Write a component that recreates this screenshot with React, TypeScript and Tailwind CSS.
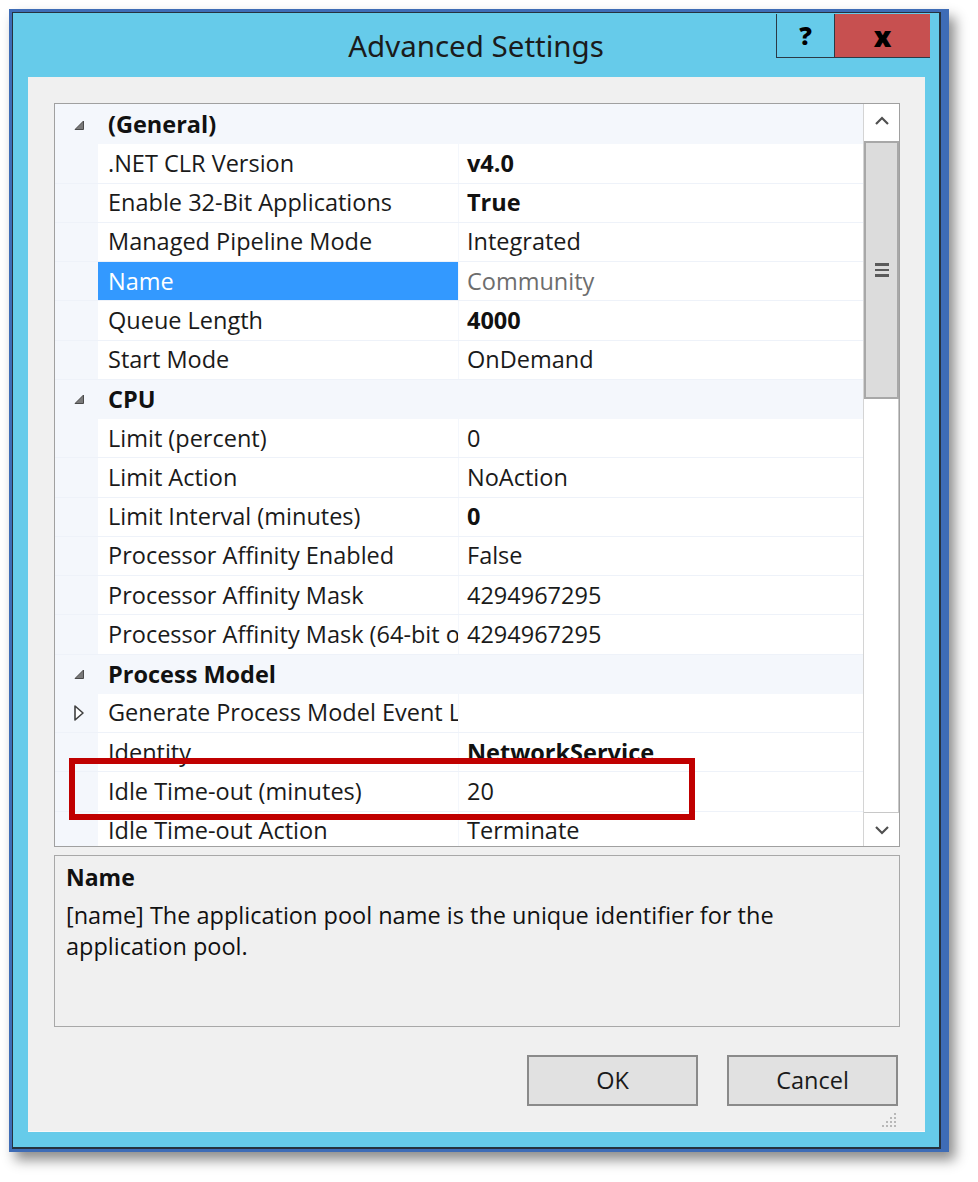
import React from 'react'

type Row =
  | { kind: 'cat'; label: string }
  | {
      kind: 'prop'
      name: string
      value: string
      bold?: boolean
      selected?: boolean
      expandable?: boolean
    }

const rows: Row[] = [
  { kind: 'cat', label: '(General)' },
  { kind: 'prop', name: '.NET CLR Version', value: 'v4.0', bold: true },
  { kind: 'prop', name: 'Enable 32-Bit Applications', value: 'True', bold: true },
  { kind: 'prop', name: 'Managed Pipeline Mode', value: 'Integrated' },
  { kind: 'prop', name: 'Name', value: 'Community', selected: true },
  { kind: 'prop', name: 'Queue Length', value: '4000', bold: true },
  { kind: 'prop', name: 'Start Mode', value: 'OnDemand' },
  { kind: 'cat', label: 'CPU' },
  { kind: 'prop', name: 'Limit (percent)', value: '0' },
  { kind: 'prop', name: 'Limit Action', value: 'NoAction' },
  { kind: 'prop', name: 'Limit Interval (minutes)', value: '0', bold: true },
  { kind: 'prop', name: 'Processor Affinity Enabled', value: 'False' },
  { kind: 'prop', name: 'Processor Affinity Mask', value: '4294967295' },
  { kind: 'prop', name: 'Processor Affinity Mask (64-bit option)', value: '4294967295' },
  { kind: 'cat', label: 'Process Model' },
  { kind: 'prop', name: 'Generate Process Model Event Log Entry', value: '', expandable: true },
  { kind: 'prop', name: 'Identity', value: 'NetworkService', bold: true },
  { kind: 'prop', name: 'Idle Time-out (minutes)', value: '20' },
  { kind: 'prop', name: 'Idle Time-out Action', value: 'Terminate' },
]

const font = { fontFamily: '"Open Sans", "Noto Sans", sans-serif' }

const ExpandedGlyph = () => (
  <svg width="12" height="12" viewBox="0 0 12 12">
    <path d="M10.5 2 L10.5 10.5 L2 10.5 Z" fill="#7a7a7a" stroke="#4a4a4a" strokeWidth="1" />
  </svg>
)

const CollapsedGlyph = () => (
  <svg width="12" height="18" viewBox="0 0 12 18">
    <path d="M2 2 L10 9 L2 16 Z" fill="white" stroke="#404040" strokeWidth="1.6" strokeLinejoin="round" />
  </svg>
)

const GridRow = ({ row }: { row: Row }) => {
  if (row.kind === 'cat') {
    return (
      <div className="flex h-[39.25px] shrink-0 items-center bg-[#f4f7fc]">
        <div className="flex w-[43px] shrink-0 justify-center pl-[4px]">
          <ExpandedGlyph />
        </div>
        <span className="pl-[10px] text-[23.5px] font-bold text-[#111]">{row.label}</span>
      </div>
    )
  }
  return (
    <div className="flex h-[39.25px] shrink-0 border-b border-[#eef2f9] bg-[#f4f7fc]">
      <div className="flex w-[43px] shrink-0 items-center justify-center pl-[4px]">
        {row.expandable && <CollapsedGlyph />}
      </div>
      <div
        className={`flex w-[360px] shrink-0 items-center overflow-hidden whitespace-nowrap pl-[10px] text-[23.5px] ${
          row.selected ? 'bg-[#3399ff] text-white' : 'bg-white text-[#1a1a1a]'
        }`}
      >
        {row.name}
      </div>
      <div
        className={`ml-px flex min-w-0 flex-1 items-center overflow-hidden whitespace-nowrap bg-white pl-[8px] text-[23.5px] ${
          row.bold ? 'font-bold text-[#111]' : row.selected ? 'text-[#6d6d6d]' : 'text-[#1a1a1a]'
        }`}
      >
        {row.value}
      </div>
    </div>
  )
}

const ScrollBar = () => (
  <div className="flex w-[36px] shrink-0 flex-col border-l border-[#d4d4d4] bg-white">
    <div className="flex h-[34px] shrink-0 items-center justify-center">
      <svg width="16" height="10" viewBox="0 0 16 10">
        <path d="M2 8 L8 2 L14 8" fill="none" stroke="#505050" strokeWidth="2.2" />
      </svg>
    </div>
    <div className="mt-[3px] flex h-[258px] shrink-0 items-center justify-center border-2 border-[#a8a8a8] bg-[#dcdcdc]">
      <div className="flex flex-col gap-[3px]">
        <div className="h-[2.5px] w-[14px] bg-[#5a5a5a]" />
        <div className="h-[2.5px] w-[14px] bg-[#5a5a5a]" />
        <div className="h-[2.5px] w-[14px] bg-[#5a5a5a]" />
      </div>
    </div>
    <div className="flex-1 border-r border-[#c8c8c8]" />
    <div className="flex h-[34px] shrink-0 items-center justify-center border-t border-[#c8c8c8]">
      <svg width="16" height="10" viewBox="0 0 16 10">
        <path d="M2 2 L8 8 L14 2" fill="none" stroke="#505050" strokeWidth="2.2" />
      </svg>
    </div>
  </div>
)

const DialogButton = ({ label }: { label: string }) => (
  <button className="flex h-[51px] w-[171px] items-center justify-center border-2 border-[#8a8a8a] bg-[#e1e1e1] text-[23.5px] text-[#1a1a1a]">
    {label}
  </button>
)

export default function App() {
  return (
    <div className="min-h-[1182px] w-[978px] bg-white pl-[9px] pt-[9px]" style={font}>
      <div className="w-[940px] bg-[#3e6cb6] pb-[3px] pl-[3px] pr-[8px] pt-[3px] shadow-[6px_8px_12px_rgba(0,0,0,0.45)]">
        <div className="bg-[#26323e] p-px pr-[2px] pb-[2px]">
          <div className="flex h-[1134px] flex-col bg-[#66cbea]">
            {/* title bar */}
            <div className="relative flex h-[64px] shrink-0 items-center justify-center">
              <span className="pt-[3px] text-[29.5px] text-[#1b1b1b]" style={{ fontFamily: '"Noto Sans", sans-serif' }}>
                Advanced Settings
              </span>
              <div className="absolute right-[9px] top-px flex h-[44px] border-b border-l border-[#2b3a46]">
                <div className="flex w-[58px] items-center justify-center border-r border-[#2b3a46] text-[25px] font-extrabold text-black">
                  ?
                </div>
                <div className="flex w-[95px] items-center justify-center bg-[#c75050] text-[28px] font-extrabold text-black">
                  x
                </div>
              </div>
            </div>

            {/* client area */}
            <div className="mx-[14px] mb-[15px] ml-[15px] flex flex-1 flex-col border-b border-[#f8f8f8] bg-[#f0f0f0] pl-[26px] pr-[25px] pt-[26px]">
              <div className="relative flex h-[744px] shrink-0 border border-[#a0a0a0] bg-[#f4f7fc]">
                <div className="flex min-w-0 flex-1 flex-col overflow-hidden pt-px">
                  {rows.map((row, i) => (
                    <GridRow key={i} row={row} />
                  ))}
                </div>
                <ScrollBar />
                <div className="pointer-events-none absolute left-[14px] top-[654px] h-[62px] w-[626px] border-[6px] border-[#c00000]" />
              </div>

              <div className="mt-[8px] h-[172px] shrink-0 border border-[#a8a8a8] bg-[#f0f0f0] px-[11px] pt-[5px] text-[#111]">
                <div className="text-[23px] font-bold leading-[32px]">Name</div>
                <p className="mt-[7px] w-[760px] text-[23.5px] leading-[31px]">
                  [name] The application pool name is the unique identifier for the application pool.
                </p>
              </div>

              <div className="mt-[28px] flex justify-end gap-[29px] pr-[2px]">
                <DialogButton label="OK" />
                <DialogButton label="Cancel" />
              </div>
              <div className="mt-auto flex justify-end pb-[2px] pr-[2px]">
                <svg width="18" height="18" viewBox="0 0 18 18">
                  {[
                    [14, 2],
                    [10, 6],
                    [14, 6],
                    [6, 10],
                    [10, 10],
                    [14, 10],
                    [2, 14],
                    [6, 14],
                    [10, 14],
                    [14, 14],
                  ].map(([x, y], i) => (
                    <rect key={i} x={x} y={y} width="2" height="2" fill="#b8b8b8" />
                  ))}
                </svg>
              </div>
            </div>
          </div>
        </div>
      </div>
    </div>
  )
}
